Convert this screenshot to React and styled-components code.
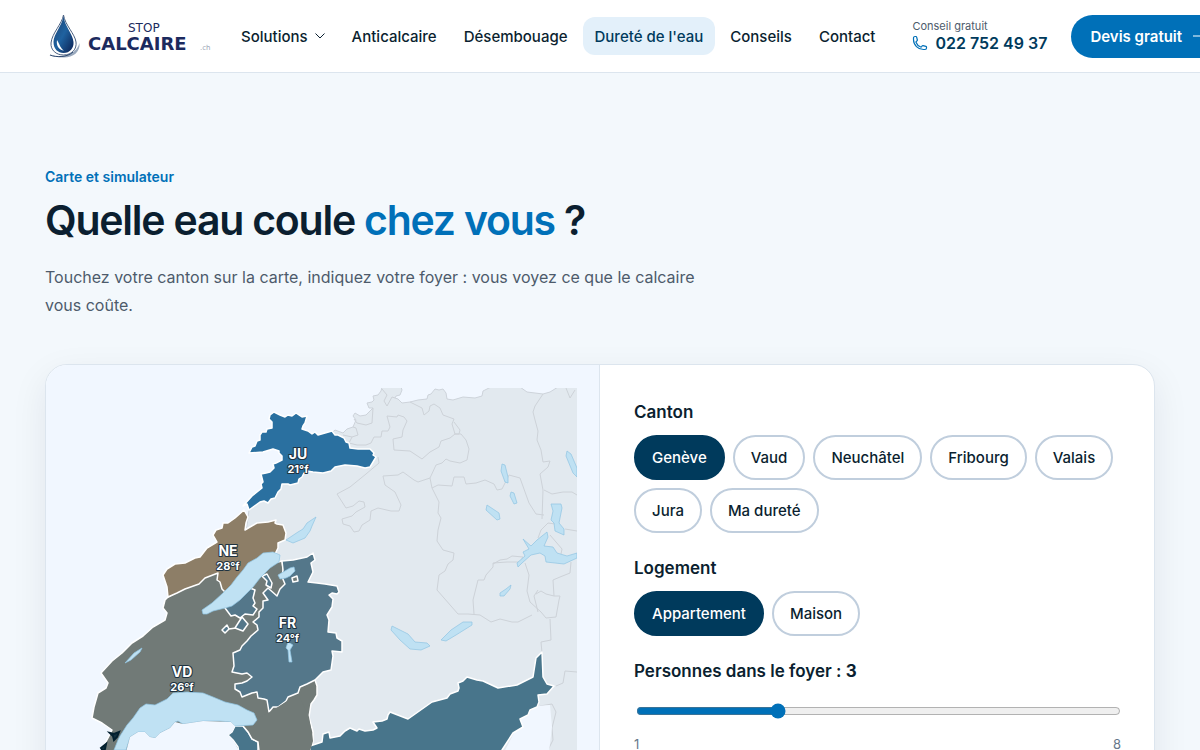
import React, { useState } from "react";
import styled, { createGlobalStyle } from "styled-components";

const GlobalStyle = createGlobalStyle`
  * {
    box-sizing: border-box;
  }

  body {
    margin: 0;
    overflow-x: hidden;
    background: #f3f8fc;
    color: #0b1f30;
    font-family: Inter, "Liberation Sans", sans-serif;
  }

  button, input {
    font-family: inherit;
  }
`;

const Header = styled.header`
  display: flex;
  align-items: center;
  height: 73px;
  padding: 0 0 0 45px;
  background: #fff;
  border-bottom: 1px solid #dce5ee;
  overflow: hidden;
  white-space: nowrap;
`;

const LogoLink = styled.a`
  flex: none;
  width: 167px;
  height: 48px;
  margin-right: 17px;

  svg {
    display: block;
  }
`;

const Nav = styled.nav`
  display: flex;
  flex: none;
  gap: 3px;
`;

const NavLink = styled.a`
  display: flex;
  align-items: center;
  gap: 7px;
  height: 38px;
  padding: 0 12px;
  border-radius: 12px;
  color: ${({ $active }) => ($active ? "#003a5c" : "#0b1f30")};
  background: ${({ $active }) => ($active ? "#e3f0fa" : "transparent")};
  font-size: 15px;
  font-weight: 500;
  text-decoration: none;
`;

const Phone = styled.a`
  flex: none;
  margin-left: 25px;
  color: #003a5c;
  text-decoration: none;
`;

const PhoneLabel = styled.span`
  display: block;
  color: #4d5b6b;
  font-size: 11px;
  line-height: 14px;
`;

const PhoneNumber = styled.span`
  display: flex;
  align-items: center;
  gap: 7px;
  font-size: 16px;
  font-weight: 600;
  line-height: 20px;
`;

const QuoteButton = styled.button`
  display: flex;
  flex: none;
  align-items: center;
  gap: 10px;
  height: 43px;
  margin-left: 24px;
  padding: 0 19px;
  border: 0;
  border-radius: 22px;
  background: #0070b8;
  color: #fff;
  font-size: 15px;
  font-weight: 600;
  cursor: pointer;
`;

const Main = styled.main`
  padding: 94px 45px 60px;
`;

const Eyebrow = styled.p`
  margin: 0;
  color: #0070b8;
  font-size: 14px;
  font-weight: 600;
  line-height: 20px;
`;

const Title = styled.h1`
  margin: 10px 0 0;
  font-size: 41px;
  font-weight: 600;
  line-height: 46px;
  letter-spacing: -0.03em;

  em {
    color: #0070b8;
    font-style: normal;
  }
`;

const Lead = styled.p`
  max-width: 672px;
  margin: 20px 0 0;
  color: #4d5b6b;
  font-size: 16px;
  line-height: 28px;
`;

const Card = styled.section`
  display: grid;
  grid-template-columns: 1fr 1fr;
  margin-top: 45px;
  border: 1px solid #dce5ee;
  border-radius: 22px;
  background: #fff;
  box-shadow: 0 12px 36px rgba(11, 31, 48, 0.08);
  overflow: hidden;
`;

const MapPane = styled.div`
  padding: 23px 22px 23px 23px;
  border-right: 1px solid #dce5ee;
  background: #f1f7ff;

  svg {
    display: block;
    width: 100%;
    height: auto;
  }
`;

const MapLabel = styled.text`
  fill: #fff;
  stroke: #1e3240;
  stroke-width: 2px;
  stroke-linejoin: round;
  paint-order: stroke;
  font-size: ${({ $small }) => ($small ? "11px" : "14px")};
  font-weight: 700;
  text-anchor: middle;
`;

const Form = styled.form`
  display: flex;
  flex-direction: column;
  gap: 22px;
  padding: 34px 33px 34px 34px;
`;

const Group = styled.fieldset`
  min-width: 0;
  margin: 0;
  padding: 0;
  border: 0;
`;

const Legend = styled.legend`
  display: block;
  padding: 0;
  font-size: 17px;
  font-weight: 600;
  line-height: 26px;
`;

const Choices = styled.div`
  display: flex;
  flex-wrap: wrap;
  gap: 8px;
  padding-top: 10px;
`;

const Choice = styled.button`
  height: 45px;
  padding: 0 16px;
  border: 2px solid ${({ $on }) => ($on ? "#003a5c" : "#c0cedd")};
  border-radius: 23px;
  background: ${({ $on }) => ($on ? "#003a5c" : "#fff")};
  color: ${({ $on }) => ($on ? "#fff" : "#0b1f30")};
  font-size: 15px;
  font-weight: 500;
  cursor: pointer;
`;

const SliderLabel = styled.label`
  display: block;
  font-size: 17px;
  font-weight: 600;
  line-height: 26px;

  strong {
    font-weight: 700;
  }
`;

const Slider = styled.input`
  display: block;
  width: calc(100% - 2px);
  height: 16px;
  margin: 19px 2px 16px;
  accent-color: #0070b8;
`;

const Scale = styled.div`
  display: flex;
  justify-content: space-between;
  color: #66788a;
  font-size: 13px;
  line-height: 18px;
`;

const Logo = () => (
  <svg width="167" height="48" viewBox="45 12 167 48" role="img" aria-label="Stop Calcaire">
    <defs>
      <linearGradient id="drop" x1="0" y1="0" x2="1" y2="1">
        <stop offset="0" stopColor="#1c3f70" />
        <stop offset=".5" stopColor="#1f62a0" />
        <stop offset="1" stopColor="#0b1f50" />
      </linearGradient>
    </defs>
    <path d="M63.500 15C62 24 52 33 51 43C50.500 50 56 55 63.500 55C72 55 77 49 76 42C75 34 65 25 63.500 15Z" fill="#fff" stroke="#4a5f80" strokeWidth="1" />
    <path d="M63.500 16C62.500 25 53.500 34 53.500 42C53.500 49 58 53 63.500 53C70 53 74 48 73.500 42C73 34 64.500 26 63.500 16Z" fill="url(#drop)" />
    <path d="M57 40C56 46 59 50 64 50.500C60.500 48.500 60 45 57 40Z" fill="#fff" />
    <path d="M47 54.500C56 58 76 57 79.500 43C80.500 52 73 57.500 64 57.500C57 57.500 51 56.500 47 54.500Z" fill="#9aa9bd" />
    <path d="M50 55C57 57.500 67 57.500 73 52" fill="none" stroke="#2c4770" strokeWidth="1" />
    <text fill="#1c2a5e" fontFamily="DejaVu Sans, sans-serif">
      <tspan x="128" y="32" fontSize="12">STOP</tspan>
      <tspan x="88" y="50" fontSize="18" fontWeight="700">CALCAIRE</tspan>
      <tspan x="200" y="50" fontSize="7" fill="#9aa3b5">.ch</tspan>
    </text>
  </svg>
);

const ChevronIcon = () => (
  <svg width="10" height="6" viewBox="0 0 10 6" fill="none" stroke="currentColor" aria-hidden="true">
    <path d="M.5.5 5 5 9.500.5" />
  </svg>
);

const PhoneIcon = () => (
  <svg width="16" height="16" viewBox="0 0 24 24" fill="none" stroke="#0070b8" strokeWidth="1.800" strokeLinejoin="round" aria-hidden="true">
    <path d="M2.250 6.750c0 8.284 6.716 15 15 15h2.250a2.250 2.250 0 0 0 2.250-2.250v-1.372c0-.516-.351-.966-.852-1.091l-4.423-1.106c-.44-.11-.902.055-1.173.417l-.97 1.293c-.282.376-.769.542-1.210.380a12.035 12.035 0 0 1-7.143-7.143c-.162-.441.004-.928.380-1.210l1.293-.970c.363-.271.527-.734.417-1.173L6.963 3.102a1.125 1.125 0 0 0-1.091-.852H4.500A2.250 2.250 0 0 0 2.250 4.500v2.250Z" />
  </svg>
);

const ArrowIcon = () => (
  <svg width="18" height="12" viewBox="0 0 18 12" fill="none" stroke="currentColor" strokeWidth="1.200" aria-hidden="true">
    <path d="M1 6h15M11 1l5 5-5 5" />
  </svg>
);

const otherLand =
  "M580 387H558L550 392 543 394 535 393 527 392 520 387H491L483 391 482 396 475 398 463 397 453 400 447 399 446 393 443 389 439 390 435 389 431 394 428 395 427 399 418 400 410 402 402 403 398 399 395 398 396 396 400 395 402 390 401 387H382L381 391 378 395 373 396 374 400 372 402 367 403 369 408 373 408 366 415 360 416 355 413 353 416 356 420 353 427 347 429 343 433 335 430 249 510 245 540 280 590 300 700 310 760 580 800Z";

const otherBorders = [
  "M382 389 387 395 384 401 387 406 392 397 395 398M373 408 372 423 366 425 357 423 354 419M343 435 352 437 358 435 356 428 353 427M352 437 349 443 357 445 366 445 371 443 374 437 381 437 382 431 388 431 390 427 387 416 397 417 398 415 404 417 407 421 403 430 402 437 393 439 394 450 410 451 422 459 430 452 439 447 441 441 450 438 455 434",
  "M410 402 422 408 424 415 429 411 430 406 434 404 440 408 443 415 454 419 452 424 455 434 461 434 466 440 469 449 467 460 460 463 450 461 446 459 442 463 436 465 430 478 418 482 414 480 403 472 398 475 383 476 385 485 395 492 401 505 399 511 391 511 378 508 371 511 370 520 362 525 359 531 354 532 350 526 343 524 342 519 352 516 356 512 365 507 364 502 359 501 353 506 346 508 337 494 350 487 366 474 379 463 378 457",
  "M430 478 432 488 438 485 452 486 454 477 464 477 466 484 476 483 485 480 494 484 497 490 502 489 505 483 509 475 520 478 529 503 536 514 544 515",
  "M454 422 460 430 459 434 455 434M432 488 439 502 438 513 441 518 438 530 437 541 443 550 454 553 453 560 448 564 445 571 439 575 437 590 458 614 468 614 480 615 491 622 500 619 512 622 518 622 532 615",
  "M543 394 539 400 535 406 533 412 535 420 538 431 537 440 541 450 543 462 550 461 548 467 540 474 543 490 542 519M544 490 552 494 563 492 572 492 577 495M566 388 570 398 575 390",
  "M474 614 473 600 478 580 484 580 486 575 493 567 493 563 507 562 520 562 523 557 512 556 507 559 500 560 493 564M525 563 529 575 527 591 530 602 541 612 546 618 556 617 559 600 560 596 554 596 553 580 560 577 570 573 571 562M538 590 534 596 538 612M554 596 546 594 541 591 536 594M550 619 551 640 541 642 542 653",
  "M538 538 541 530 548 523 555 524M550 535 562 549 561 554M565 529 577 531M556 686 563 683 565 671 577 672M540 706 552 704 556 712 552 728 553 740 548 750",
];

const lakes = [
  "M202 610 203 614 207 614 213 611 225 608 232 606 240 600 253 587 260 578 270 568 279 562 280 555 273 552 263 553 257 558 248 563 243 570 237 577 231 585 223 593 212 603Z",
  "M278 575 280 579 286 578 290 576 295 571 294 567 290 568Z",
  "M286 540 293 543 305 538 310 531 312 526 316 517 307 523 303 529 298 532Z",
  "M125 663 131 660 140 652 142 648 134 653Z",
  "M288 642 293 645 290 650 292 662 289 662 288 650 286 648Z",
  "M114 750 118 740 120 736 127 725 133 718 140 708 146 704 155 705 167 699 173 693 187 692 203 693 213 697 225 702 238 705 247 710 254 713 257 720 253 725 235 726 231 722 220 721 203 721 183 724 178 721 175 722 170 728 160 733 155 738 150 737 145 732 138 732 130 737 126 750Z",
  "M392 626 391 630 400 640 410 649 421 650 430 646 427 643 415 642 408 634Z",
  "M441 640 446 641 456 635 472 625 472 622 463 622 451 630Z",
  "M487 505 486 510 497 520 500 519 499 513Z",
  "M502 464 501 471 505 482 508 483 508 477 505 465Z",
  "M511 492 510 496 514 504 517 503 514 493Z",
  "M567 451 566 456 573 473 577 477V468L571 454Z",
  "M551 504 553 511 551 520 554 523 555 531 564 535 564 529 559 523 562 508 561 504Z",
  "M523 539 531 546 537 540 547 532 548 537 544 546 553 547 557 553 567 556 577 553V558L564 564 546 562 545 556 540 553 531 555 522 563 518 567 517 563 525 556 523 552 529 549Z",
  "M500 593 506 589 511 585 510 589 504 596 500 596Z",
];

const CantonMap = () => (
  <svg viewBox="69 388 508 400" role="img" aria-label="Carte de la dureté de l'eau par canton">
    <path d={otherLand} fill="#e2e9ef" stroke="#cdd3da" />
    <g fill="none" stroke="#cdd2d8" strokeLinejoin="round">
      {otherBorders.map((d) => (
        <path key={d} d={d} />
      ))}
    </g>
    <path d="M500 760 514 733 523 726 520 719 537 706 550 705 552 727 548 760Z" fill="#f1f7ff" />
    <g stroke="#fff" strokeWidth="1.500" strokeLinejoin="round">
      <path fill="#2a70a0" d="M249 453 252 447 255 446 257 441 260 440 260 435 262 432 266 432 267 429 272 428 272 422 269 419 270 415 274 412 280 415 285 417 288 415 292 416 296 413 299 415 302 417 307 416 305 423 303 426 302 429 308 431 312 434 315 432 318 435 325 433 332 431 335 435 338 435 344 438 346 442 349 443 350 448 358 449 370 449 374 453 373 455 376 457 373 462 370 467 365 468 357 466 345 465 335 467 331 471 323 473 313 472 307 471 304 473 302 477 299 479 298 483 290 485 288 484 282 484 281 489 278 492 275 498 271 499 268 503 264 501 260 502 249 510 247 504 243 506 252 496 262 488 261 484 263 482 261 474 266 473 270 472 274 468 273 464 276 463 282 460 282 456 279 453 279 451 273 449 263 452Z" />
      <path fill="#717a77" d="M168 597 165 600 163 608 167 613 165 620 153 627 143 636 132 643 122 653 112 661 101 673 108 683 106 688 98 693 94 707 92 718 102 723 112 730 108 738 103 747 105 765H308L313 741 313 732 309 717 311 704 314 700 317 695 317 686 315 680 300 640 286 590 282 561 274 563 255 580 217 570Z" />
      <path fill="#8d7e67" d="M244 510 248 517 246 523 245 530 250 527 257 523 268 522 276 520 275 523 277 524 283 525 286 533 285 540 278 543 278 548 276 552 273 562 225 592 222 589 220 582 217 580 218 573 205 578 199 584 185 589 177 593 168 597 167 587 163 575 167 569 175 564 185 563 195 558 200 557 207 548 217 542 213 535 216 530 222 528 223 523 228 523 235 518Z" />
      <path fill="#54778a" d="M282 561 293 560 307 557 313 553 315 560 311 563 313 572 308 582 317 583 325 584 337 586 339 592 337 594 332 593 329 595 333 599 332 607 327 615 329 620 328 632 336 633 337 638 342 641 342 652 332 651 333 656 331 670 323 672 315 680 307 684 300 687 298 693 288 697 286 701 278 707 273 707 269 712 267 700 264 699 258 698 257 692 252 693 247 695 242 697 240 692 235 689 235 684 242 683 247 681 252 677 247 673 242 674 232 672 234 666 233 653 240 650 242 646 247 641 251 636 258 630 257 625 253 622 259 617 259 612 263 608 263 601 268 600 263 593 268 588 277 596 280 589 285 584 282 577 283 570Z" />
      <path fill="#54778a" d="M225 608 231 616 235 615 240 618 245 614 253 615 257 609 253 606 255 603 253 598 255 590 250 588 240 590ZM262 576 267 581 266 585 271 588 272 583 267 574ZM242 617 248 624 243 631 235 628ZM222 630 227 625 229 629 225 633ZM229 629 236 628" />
      <path fill="#717a77" d="M292 578 297 576 298 581 293 582Z" />
      <path fill="#48758b" d="M235 726 232 732 228 735 233 740 238 747 241 765H310L310 746 322 742 323 734 329 732 330 738 340 736 345 731 350 728 357 731 359 729 365 731 373 730 377 728 373 722 382 721 387 719 388 715 390 712 408 719 432 702 447 698 450 694 458 691 459 688 458 683 463 681 467 677 477 680 483 681 498 688 517 685 533 677 536 658 542 652 543 677 547 684 554 686 547 694 538 695 539 702 537 707 530 710 528 715 520 719 523 727 513 733 502 750 495 788H258V742L252 739 248 732 243 726Z" />
      <path fill="#717a77" d="M243 726 248 732 252 739 258 742 259 765H306L313 741 311 728 309 717 298 694 270 712Z" stroke="none" />
    </g>
    <path d="M243 726 248 732 252 739 258 742 259 751" fill="none" stroke="#fff" strokeWidth="1.500" />
    <g fill="#bfe1f3" stroke="#8fc4e2" strokeWidth=".7">
      {lakes.map((d) => (
        <path key={d} d={d} />
      ))}
    </g>
    <path d="M126 752 130 737 138 732 145 732 150 737 155 738 160 733 170 728 175 722 183 724 203 721 231 722 235 726 232 732 228 735 233 740 240 752Z" fill="#f1f7ff" />
    <path d="M110 733 114 734 119 732 117 737 114 740 113 736ZM101 748 106 744 105 749 103 751Z" fill="#12303f" stroke="#03202f" strokeWidth="2" />
    <MapLabel x="298" y="459">JU</MapLabel>
    <MapLabel $small x="298" y="473">21°f</MapLabel>
    <MapLabel x="228" y="556">NE</MapLabel>
    <MapLabel $small x="228" y="570">28°f</MapLabel>
    <MapLabel x="287.500" y="628">FR</MapLabel>
    <MapLabel $small x="287.500" y="642">24°f</MapLabel>
    <MapLabel x="182" y="677">VD</MapLabel>
    <MapLabel $small x="182" y="691">26°f</MapLabel>
  </svg>
);

const links = ["Anticalcaire", "Désembouage", "Dureté de l'eau", "Conseils", "Contact"];
const cantons = ["Genève", "Vaud", "Neuchâtel", "Fribourg", "Valais", "Jura", "Ma dureté"];
const homes = ["Appartement", "Maison"];

const ChoiceGroup = ({ title, options, value, onChange }) => (
  <Group>
    <Legend>{title}</Legend>
    <Choices>
      {options.map((option) => (
        <Choice
          key={option}
          type="button"
          $on={option === value}
          aria-pressed={option === value}
          onClick={() => onChange(option)}
        >
          {option}
        </Choice>
      ))}
    </Choices>
  </Group>
);

const App = () => {
  const [canton, setCanton] = useState("Genève");
  const [home, setHome] = useState("Appartement");
  const [people, setPeople] = useState(3);

  return (
    <>
      <GlobalStyle />
      <Header>
        <LogoLink href="#accueil">
          <Logo />
        </LogoLink>
        <Nav>
          <NavLink href="#solutions">
            Solutions
            <ChevronIcon />
          </NavLink>
          {links.map((link) => (
            <NavLink key={link} href="#" $active={link === "Dureté de l'eau"}>
              {link}
            </NavLink>
          ))}
        </Nav>
        <Phone href="tel:+41227524937">
          <PhoneLabel>Conseil gratuit</PhoneLabel>
          <PhoneNumber>
            <PhoneIcon />
            022 752 49 37
          </PhoneNumber>
        </Phone>
        <QuoteButton type="button">
          Devis gratuit
          <ArrowIcon />
        </QuoteButton>
      </Header>

      <Main>
        <Eyebrow>Carte et simulateur</Eyebrow>
        <Title>
          Quelle eau coule <em>chez vous</em> ?
        </Title>
        <Lead>
          Touchez votre canton sur la carte, indiquez votre foyer : vous voyez ce que le calcaire
          vous coûte.
        </Lead>

        <Card>
          <MapPane>
            <CantonMap />
          </MapPane>
          <Form>
            <ChoiceGroup title="Canton" options={cantons} value={canton} onChange={setCanton} />
            <ChoiceGroup title="Logement" options={homes} value={home} onChange={setHome} />
            <div>
              <SliderLabel htmlFor="people">
                Personnes dans le foyer : <strong>{people}</strong>
              </SliderLabel>
              <Slider
                id="people"
                type="range"
                min="1"
                max="8"
                value={people}
                onChange={(e) => setPeople(Number(e.target.value))}
              />
              <Scale>
                <span>1</span>
                <span>8</span>
              </Scale>
            </div>
          </Form>
        </Card>
      </Main>
    </>
  );
};

export default App;
